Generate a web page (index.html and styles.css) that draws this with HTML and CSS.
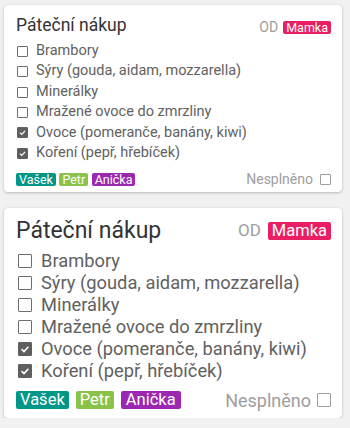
FILE: index.html
```html
<!DOCTYPE html>
<html lang="cs">
<head>
<meta charset="utf-8">
<link rel="stylesheet" href="styles.css">
</head>
<body>
<div class="card small">
  <div class="head">
    <div class="title">Páteční nákup</div>
    <div class="from"><span class="od">OD</span><span class="tag pink">Mamka</span></div>
  </div>
  <ul class="items">
    <li><span class="cb"></span>Brambory</li>
    <li><span class="cb"></span>Sýry (gouda, aidam, mozzarella)</li>
    <li><span class="cb"></span>Minerálky</li>
    <li><span class="cb"></span>Mražené ovoce do zmrzliny</li>
    <li><span class="cb on"><svg viewBox="0 0 12 12"><path d="M2.6 6.2 L5 8.5 L9.4 3.8" /></svg></span>Ovoce (pomeranče, banány, kiwi)</li>
    <li><span class="cb on"><svg viewBox="0 0 12 12"><path d="M2.6 6.2 L5 8.5 L9.4 3.8" /></svg></span>Koření (pepř, hřebíček)</li>
  </ul>
  <div class="foot">
    <div class="tags"><span class="tag teal">Vašek</span><span class="tag green">Petr</span><span class="tag purple">Anička</span></div>
    <div class="done">Nesplněno<span class="cb"></span></div>
  </div>
</div>
<div class="card big">
  <div class="head">
    <div class="title">Páteční nákup</div>
    <div class="from"><span class="od">OD</span><span class="tag pink">Mamka</span></div>
  </div>
  <ul class="items">
    <li><span class="cb"></span>Brambory</li>
    <li><span class="cb"></span>Sýry (gouda, aidam, mozzarella)</li>
    <li><span class="cb"></span>Minerálky</li>
    <li><span class="cb"></span>Mražené ovoce do zmrzliny</li>
    <li><span class="cb on"><svg viewBox="0 0 12 12"><path d="M2.6 6.2 L5 8.5 L9.4 3.8" /></svg></span>Ovoce (pomeranče, banány, kiwi)</li>
    <li><span class="cb on"><svg viewBox="0 0 12 12"><path d="M2.6 6.2 L5 8.5 L9.4 3.8" /></svg></span>Koření (pepř, hřebíček)</li>
  </ul>
  <div class="foot">
    <div class="tags"><span class="tag teal">Vašek</span><span class="tag green">Petr</span><span class="tag purple">Anička</span></div>
    <div class="done">Nesplněno<span class="cb"></span></div>
  </div>
</div>
</body>
</html>
```
FILE: styles.css
```css
html, body {
  margin: 0;
  padding: 0;
  background: #f1f1f1;
  font-family: Roboto, "Noto Sans", sans-serif;
}
body {
  padding: 5px 8px 0 4px;
}
.card {
  background: #fff;
  border-radius: 4px;
  box-shadow: 0 1px 3px rgba(0,0,0,0.22), 0 0 1px rgba(0,0,0,0.12);
  color: #616161;
}
.head {
  display: flex;
  justify-content: space-between;
  align-items: center;
}
.title {
  color: #333;
  font-weight: 400;
}
.from {
  display: flex;
  align-items: center;
}
.od {
  color: #9e9e9e;
}
.tag {
  color: #fff;
  border-radius: 2px;
}
.pink { background: #e91e63; }
.teal { background: #009688; }
.green { background: #8bc34a; }
.purple { background: #9c27b0; }
.items {
  list-style: none;
  margin: 0;
  padding: 0;
}
.items li {
  display: flex;
  align-items: center;
}
.cb {
  box-sizing: border-box;
  border: 1.5px solid #6e6e6e;
  border-radius: 1px;
  display: flex;
  align-items: center;
  justify-content: center;
  flex: none;
}
.cb.on {
  background: #5f5f5f;
  border-color: #5f5f5f;
}
.cb svg {
  width: 100%;
  height: 100%;
  fill: none;
  stroke: #fff;
  stroke-width: 1.6;
}
.foot {
  display: flex;
  justify-content: space-between;
  align-items: center;
}
.tags {
  display: flex;
}
.done {
  display: flex;
  align-items: center;
  color: #9e9e9e;
}
.done .cb {
  border-color: #9e9e9e;
}

/* small card */
.small {
  padding: 8px 11px 4px 12px;
  font-size: 14.5px;
}
.small .title { font-size: 17.5px; line-height: 22px; }
.small .head { height: 24px; }
.small .from { font-size: 14px; line-height: 13px; gap: 5px; margin-top: 4px; }
.small .tag { padding: 0 3px; font-size: 12.5px; line-height: 13px; }
.small .items { margin-top: 4px; }
.small .items li { line-height: 20.4px; gap: 8px; }
.small .cb { width: 11px; height: 11px; margin-left: 1px; }
.small .foot { margin-top: 7px; height: 18px; }
.small .tags { gap: 3.5px; }
.small .done { gap: 6px; font-size: 14px; }

/* big card */
.big {
  margin-top: 16px;
  padding: 8px 11px 7px 12px;
  font-size: 18.3px;
}
.big .title { font-size: 23px; line-height: 29px; }
.big .head { height: 29px; }
.big .from { font-size: 17px; line-height: 17px; gap: 7px; }
.big .tag { padding: 0 4px; font-size: 16.5px; line-height: 18px; }
.big .items { margin-top: 5px; }
.big .items li { line-height: 22px; gap: 9px; }
.big .cb { width: 14px; height: 14px; margin-left: 2px; }
.big .foot { margin-top: 7px; height: 22px; }
.big .tags { gap: 7px; }
.big .tag.purple { padding: 0 5px; }
.big .done { gap: 4px; font-size: 18px; }
```
